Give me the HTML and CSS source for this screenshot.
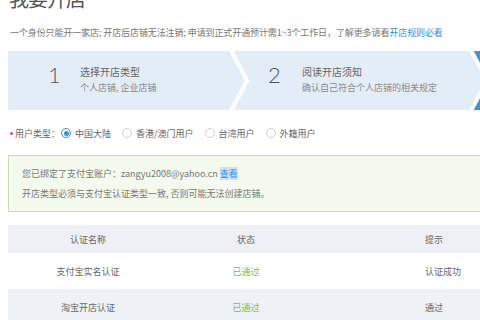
FILE: index.html
```html
<!DOCTYPE html>
<html lang="zh-CN">
<head>
<meta charset="utf-8">
<link rel="stylesheet" href="styles.css">
</head>
<body>
<div class="page">
  <h1 class="title">我要开店</h1>
  <p class="desc">一个身份只能开一家店; 开店后店铺无法注销; 申请到正式开通预计需1~3个工作日，了解更多请看<a class="link">开店规则必看</a></p>

  <div class="steps">
    <div class="step step-1">
      <span class="num">1</span>
      <div class="step-text">
        <div class="step-title">选择开店类型</div>
        <div class="step-sub">个人店铺, 企业店铺</div>
      </div>
    </div>
    <svg class="chev" width="20" height="59" viewBox="0 0 20 59"><polyline points="1,-1 17,29.5 1,60" fill="none" stroke="#fff" stroke-width="4"/></svg>
    <div class="step step-2">
      <span class="num">2</span>
      <div class="step-text">
        <div class="step-title">阅读开店须知</div>
        <div class="step-sub">确认自己符合个人店铺的相关规定</div>
      </div>
    </div>
    <svg class="chev" width="20" height="59" viewBox="0 0 20 59"><polygon points="3,0 20,0 20,59 3,59 19,29.5" fill="#4a8fd6"/><polyline points="1,-1 17,29.5 1,60" fill="none" stroke="#fff" stroke-width="4"/></svg>
    <div class="step step-3"></div>
  </div>

  <div class="usertype">
    <span class="req"></span>
    <span class="label">用户类型：</span>
    <span class="radio checked"></span><span class="opt">中国大陆</span>
    <span class="radio"></span><span class="opt">香港/澳门用户</span>
    <span class="radio"></span><span class="opt">台湾用户</span>
    <span class="radio"></span><span class="opt">外籍用户</span>
  </div>

  <div class="notice">
    <p>您已绑定了支付宝账户：zangyu2008@yahoo.cn <a class="link sel">查看</a></p>
    <p>开店类型必须与支付宝认证类型一致, 否则可能无法创建店铺。</p>
  </div>

  <table class="auth">
    <colgroup><col class="c1"><col class="c2"><col class="c3"></colgroup>
    <thead>
      <tr><th>认证名称</th><th>状态</th><th>提示</th></tr>
    </thead>
    <tbody>
      <tr><td>支付宝实名认证</td><td class="ok">已通过</td><td>认证成功</td></tr>
      <tr class="alt"><td>淘宝开店认证</td><td class="ok">已通过</td><td>通过</td></tr>
    </tbody>
  </table>
</div>
</body>
</html>
```

FILE: styles.css
```css
html, body {
  margin: 0;
  padding: 0;
  background: #fff;
  overflow: hidden;
  width: 480px;
  height: 320px;
}
body {
  font-family: "Noto Sans CJK SC", "Noto Sans", sans-serif;
  color: #666;
}
.page {
  padding-left: 8px;
  width: 620px;
}
.title {
  margin: -13px 0 0 1px;
  font-size: 20px;
  line-height: 24px;
  font-weight: normal;
  color: #555;
  letter-spacing: -1px;
}
.desc {
  margin: 14px 0 0 2px;
  font-size: 9px;
  line-height: 16px;
  color: #777;
  white-space: nowrap;
  letter-spacing: -0.1px;
}
.link {
  color: #3a8ee6;
}
.link.sel {
  background: #cfe3f7;
}
.steps {
  margin-top: 10px;
  height: 59px;
  display: flex;
  background: #e3edf8;
  overflow: hidden;
}
.chev {
  flex: none;
  display: block;
}
.step {
  display: flex;
  align-items: flex-start;
  padding-top: 13px;
  box-sizing: border-box;
  flex: none;
}
.step-1 { width: 222px; padding-left: 40px; }
.step-2 { width: 220px; padding-left: 18px; }
.step-3 { width: 100px; background: #4a8fd6; }
.num {
  width: 34px;
  font-family: Lato, "Liberation Sans", sans-serif;
  font-weight: 300;
  font-size: 22px;
  line-height: 24px;
  margin-top: -1px;
  color: #555;
}
.step-1 .num { width: 32px; }
.step-title {
  font-size: 10px;
  line-height: 16px;
  color: #666;
}
.step-sub {
  font-size: 9px;
  line-height: 16px;
  color: #8a8a8a;
}
.usertype {
  margin-top: 13px;
  height: 20px;
  display: flex;
  align-items: center;
  font-size: 9px;
  color: #666;
}
.req {
  width: 3px;
  height: 3px;
  border-radius: 50%;
  background: #e8484f;
  margin: 0 2px 0 2px;
}
.label {
  margin-right: 1px;
}
.radio {
  width: 10px;
  height: 10px;
  box-sizing: border-box;
  border: 1px solid #cfcfcf;
  border-radius: 50%;
  margin-right: 4px;
  display: flex;
  align-items: center;
  justify-content: center;
}
.radio.checked {
  border-color: #3d8ee0;
}
.radio.checked::after {
  content: "";
  width: 5px;
  height: 5px;
  border-radius: 50%;
  background: #3d8ee0;
}
.opt {
  margin-right: 11px;
}
.notice {
  margin-top: 12px;
  height: 57px;
  box-sizing: border-box;
  border: 1px solid #c9dcb0;
  background: #f4faee;
  padding: 8px 0 0 13px;
  font-size: 9px;
  color: #777;
}
.notice p {
  margin: 0;
  line-height: 20px;
  white-space: nowrap;
}
.auth {
  margin-top: 13px;
  border-collapse: collapse;
  table-layout: fixed;
  width: 560px;
  font-size: 9px;
  color: #666;
}
.c1 { width: 160px; }
.c2 { width: 156px; }
.c3 { width: 244px; }
.auth th, .auth td {
  text-align: center;
  padding: 0;
  font-weight: normal;
}
.auth th {
  height: 28px;
  background: #eef0f5;
}
.auth td {
  height: 36px;
}
.auth th:nth-child(3), .auth td:nth-child(3) {
  text-align: left;
  padding-left: 101px;
}
.auth .alt td {
  background: #eef1f6;
}
.auth .ok {
  color: #7cc04a;
}
```
